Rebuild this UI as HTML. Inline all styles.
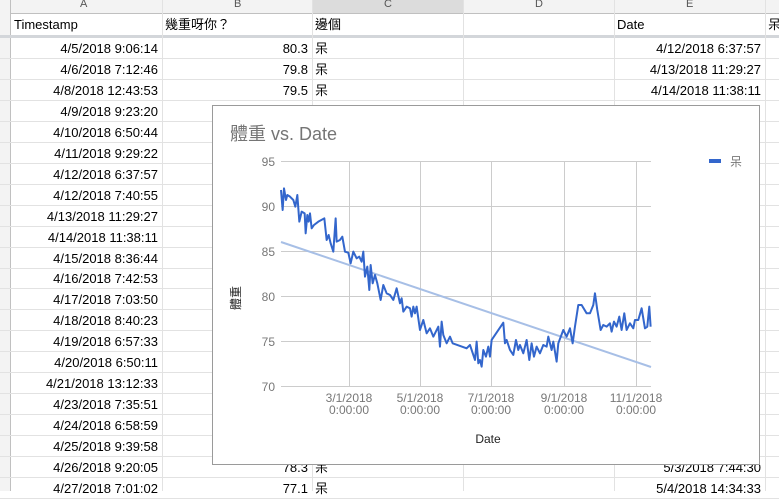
<!DOCTYPE html>
<html><head><meta charset="utf-8"><style>
body{margin:0;width:779px;height:491px;overflow:hidden;background:#fff;font-family:"Liberation Sans","Noto Sans CJK TC",sans-serif;font-size:13px;color:#000;position:relative}
.c{position:absolute;white-space:nowrap;line-height:15px}
.vl{position:absolute;top:0;height:491px;width:1px;background:#e2e2e2}
.hl{position:absolute;left:0;width:779px;height:1px;background:#e2e2e2}
</style></head><body>
<div style="position:absolute;left:0;top:0;width:779px;height:13px;background:#f3f3f3;border-bottom:1px solid #c0c0c0"></div>
<div style="position:absolute;left:312px;top:0;width:151px;height:13px;background:#dcdcdc"></div>
<div style="position:absolute;left:0;top:0;width:10px;height:491px;background:#f3f3f3;border-right:1px solid #c0c0c0"></div>
<div style="position:absolute;left:0;top:35px;width:779px;height:3px;background:#d3d6da"></div>
<div class="vl" style="left:162px"></div><div class="vl" style="left:312px"></div><div class="vl" style="left:463px"></div><div class="vl" style="left:614px"></div><div class="vl" style="left:765px"></div>
<div class="c" style="left:80px;top:-3px;color:#555;font-size:11px">A</div>
<div class="c" style="left:234px;top:-3px;color:#555;font-size:11px">B</div>
<div class="c" style="left:384px;top:-3px;color:#555;font-size:11px">C</div>
<div class="c" style="left:535px;top:-3px;color:#555;font-size:11px">D</div>
<div class="c" style="left:686px;top:-3px;color:#555;font-size:11px">E</div>
<div class="c" style="left:14px;top:17px">Timestamp</div>
<div class="c" style="left:165px;top:17px">幾重呀你？</div>
<div class="c" style="left:315px;top:17px">邊個</div>
<div class="c" style="left:617px;top:17px">Date</div>
<div class="c" style="left:768px;top:17px">呆</div>
<div id="rows"></div>
<script>
var a=["4/5/2018 9:06:14","4/6/2018 7:12:46","4/8/2018 12:43:53","4/9/2018 9:23:20","4/10/2018 6:50:44","4/11/2018 9:29:22","4/12/2018 6:37:57","4/12/2018 7:40:55","4/13/2018 11:29:27","4/14/2018 11:38:11","4/15/2018 8:36:44","4/16/2018 7:42:53","4/17/2018 7:03:50","4/18/2018 8:40:23","4/19/2018 6:57:33","4/20/2018 6:50:11","4/21/2018 13:12:33","4/23/2018 7:35:51","4/24/2018 6:58:59","4/25/2018 9:39:58","4/26/2018 9:20:05","4/27/2018 7:01:02"];
var b={0:"80.3",1:"79.8",2:"79.5",20:"78.3",21:"77.1"};
var e={0:"4/12/2018 6:37:57",1:"4/13/2018 11:29:27",2:"4/14/2018 11:38:11",20:"5/3/2018 7:44:30",21:"5/4/2018 14:34:33"};
var h="";
for(var i=0;i<a.length;i++){var t=38+i*20.95;var y=Math.round(t+3);
h+='<div class="hl" style="top:'+Math.round(t+20)+'px"></div>';
h+='<div class="c" style="right:'+(779-158)+'px;top:'+y+'px">'+a[i]+'</div>';
if(b[i]){h+='<div class="c" style="right:'+(779-308)+'px;top:'+y+'px">'+b[i]+'</div><div class="c" style="left:315px;top:'+y+'px">呆</div>';}
if(e[i]){h+='<div class="c" style="right:'+(779-761)+'px;top:'+y+'px">'+e[i]+'</div>';}
}
document.getElementById("rows").innerHTML=h;
</script>
<div style="position:absolute;left:212px;top:105px;width:546px;height:358px;background:#fff;border:1px solid #9a9a9a"></div>
<svg style="position:absolute;left:0;top:0" width="779" height="491">
<g stroke="#ccc" stroke-width="1">
<line x1="281" y1="161.5" x2="651" y2="161.5"/><line x1="281" y1="206.5" x2="651" y2="206.5"/><line x1="281" y1="251.5" x2="651" y2="251.5"/><line x1="281" y1="296.5" x2="651" y2="296.5"/><line x1="281" y1="341.5" x2="651" y2="341.5"/><line x1="281" y1="386.5" x2="651" y2="386.5"/>
<line x1="349.5" y1="161" x2="349.5" y2="386"/><line x1="420.5" y1="161" x2="420.5" y2="386"/><line x1="491.5" y1="161" x2="491.5" y2="386"/><line x1="564.5" y1="161" x2="564.5" y2="386"/><line x1="636.5" y1="161" x2="636.5" y2="386"/>
</g>
<line x1="281" y1="242" x2="651" y2="367" stroke="#a7bfe6" stroke-width="2"/>
<g transform="translate(210,100) scale(0.3333)">
<polyline fill="none" stroke="#3366cc" stroke-width="6" stroke-linejoin="round" points="213,270 218,330 222,265 228,300 232,285 240,290 250,300 256,320 262,285 268,365 275,335 284,340 287,400 292,345 296,365 300,340 305,385 312,375 325,365 343,355 350,420 356,405 362,430 370,455 377,355 380,425 390,420 397,410 405,455 415,458 422,490 430,455 440,475 448,470 455,485 460,455 465,530 472,500 478,570 482,495 488,550 495,525 502,550 512,600 520,555 530,580 540,585 550,600 560,565 570,610 575,595 580,635 590,620 600,625 605,650 610,620 615,640 620,620 630,690 640,660 650,700 660,685 670,710 685,680 690,740 695,665 700,705 710,730 720,710 728,730 770,745 780,735 795,780 800,725 805,790 810,780 815,800 820,750 828,770 835,740 840,770 845,720 880,668 885,730 890,720 900,750 910,765 918,720 925,750 930,735 940,760 950,720 958,780 965,730 972,770 980,740 990,760 1000,735 1010,740 1015,710 1025,750 1030,725 1040,785 1045,730 1060,690 1070,710 1080,685 1088,730 1095,680 1105,615 1115,615 1130,640 1140,640 1150,615 1155,580 1162,630 1172,690 1180,675 1190,680 1200,670 1205,695 1212,665 1220,680 1228,650 1235,690 1243,640 1250,690 1260,670 1270,685 1275,660 1285,660 1295,625 1305,685 1312,680 1318,620 1322,680"/>
</g>
<rect x="709" y="159" width="12" height="4" fill="#3366cc"/>
<g font-family="Liberation Sans, sans-serif" font-size="12" fill="#777" text-anchor="end">
<text x="275" y="166">95</text><text x="275" y="211">90</text><text x="275" y="256">85</text><text x="275" y="301">80</text><text x="275" y="346">75</text><text x="275" y="391">70</text>
</g>
<g font-family="Liberation Sans, sans-serif" font-size="12" fill="#777" text-anchor="middle">
<text x="349" y="402">3/1/2018</text><text x="349" y="414">0:00:00</text>
<text x="420" y="402">5/1/2018</text><text x="420" y="414">0:00:00</text>
<text x="491" y="402">7/1/2018</text><text x="491" y="414">0:00:00</text>
<text x="564" y="402">9/1/2018</text><text x="564" y="414">0:00:00</text>
<text x="636" y="402">11/1/2018</text><text x="636" y="414">0:00:00</text>
</g>
<text x="488" y="443" font-family="Liberation Sans, sans-serif" font-size="12" fill="#222" text-anchor="middle">Date</text>
<text x="730" y="166" font-family="Liberation Sans, Noto Sans CJK TC, sans-serif" font-size="12" fill="#777">呆</text>
<text x="230" y="140" font-family="Liberation Sans, Noto Sans CJK TC, sans-serif" font-size="18" fill="#757575">體重 vs. Date</text>
<text transform="translate(240,298) rotate(-90)" font-family="Liberation Sans, Noto Sans CJK TC, sans-serif" font-size="12" fill="#222" text-anchor="middle">體重</text>
</svg>
</body></html>
